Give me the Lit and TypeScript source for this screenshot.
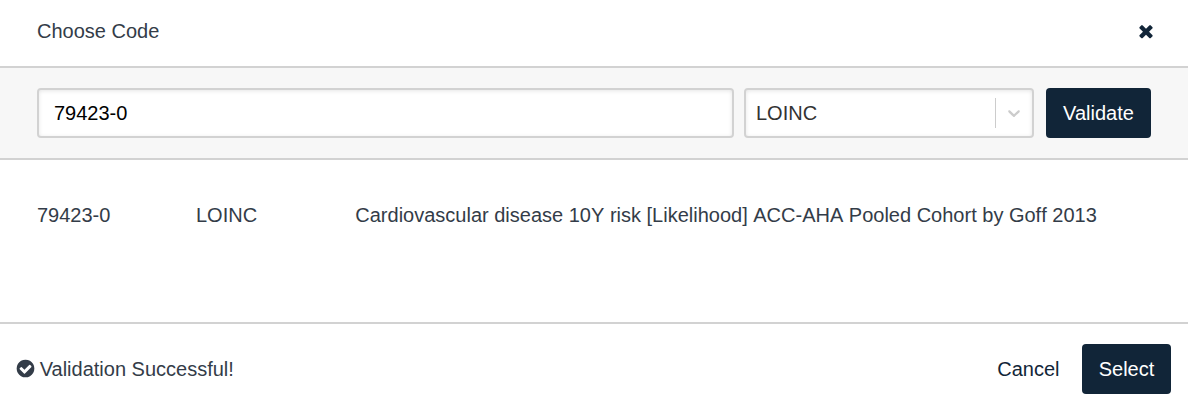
import { LitElement, html, css } from "lit";
import { customElement, state } from "lit/decorators.js";

@customElement("app-root")
export class AppRoot extends LitElement {
  @state() private code = "79423-0";
  @state() private system = "LOINC";
  @state() private description =
    "Cardiovascular disease 10Y risk [Likelihood] ACC-AHA Pooled Cohort by Goff 2013";

  static styles = css`
    :host {
      display: block;
      font-family: "Liberation Sans", Arial, Helvetica, sans-serif;
      font-size: 20px;
      line-height: 24px;
      color: #333c48;
      background: #fff;
    }
    * {
      box-sizing: border-box;
    }
    svg {
      display: block;
      fill: currentColor;
    }
    button {
      font: inherit;
      border: 0;
      margin: 0;
      padding: 0;
      height: 50px;
      color: #112538;
      background: none;
    }
    .modal {
      display: flex;
      flex-direction: column;
      height: 411px;
    }
    .header {
      display: flex;
      align-items: center;
      justify-content: space-between;
      height: 68px;
      padding: 0 32px 4px 37px;
      border-bottom: 2px solid #d2d2d2;
    }
    .header .close {
      height: 20px;
    }
    .search {
      display: flex;
      height: 92px;
      padding: 20px 37px 0;
      background: #f7f7f7;
      border-bottom: 2px solid #d2d2d2;
    }
    .field {
      height: 50px;
      border: 2px solid #d2d2d2;
      border-radius: 4px;
      background: #fff;
      box-shadow: inset 0 1px 4px rgba(0, 0, 0, 0.1);
    }
    input {
      flex: 1;
      min-width: 0;
      margin: 0 10px 0 0;
      padding: 0 15px;
      font: inherit;
      color: #000;
      outline: none;
    }
    .select {
      display: flex;
      align-items: center;
      width: 290px;
      margin-right: 12px;
      color: #333;
    }
    .value {
      flex: 1;
      padding-left: 10px;
    }
    .separator {
      width: 1px;
      height: 30px;
      background: #ccc;
    }
    .arrow {
      padding: 0 8px;
      color: #ccc;
    }
    .primary {
      color: #fff;
      background: #112538;
      border-radius: 4px;
    }
    .validate {
      width: 105px;
    }
    .results {
      flex: 1;
      display: grid;
      grid-template-columns: 159px 159.3px 1fr;
      align-content: start;
      padding: 43px 37px 0;
      white-space: nowrap;
    }
    .description {
      font-kerning: none;
    }
    .footer {
      display: flex;
      align-items: center;
      height: 89px;
      padding: 2px 17px 0 16px;
      border-top: 2px solid #d2d2d2;
    }
    .status {
      flex: 1;
      display: flex;
      align-items: center;
      gap: 4.7px;
    }
    .cancel {
      margin-right: 22.5px;
    }
    .choose {
      width: 89px;
    }
  `;

  render() {
    return html`
      <div class="modal">
        <div class="header">
          <span>Choose Code</span>
          <button class="close" aria-label="Close">
            <svg width="20" height="20" viewBox="0 0 1792 1792">
              <path d="M1490 1322q0 40-28 68l-136 136q-28 28-68 28t-68-28l-294-294-294 294q-28 28-68 28t-68-28l-136-136q-28-28-28-68t28-68l294-294-294-294q-28-28-28-68t28-68l136-136q28-28 68-28t68 28l294 294 294-294q28-28 68-28t68 28l136 136q28 28 28 68t-28 68l-294 294 294 294q28 28 28 68z"/>
            </svg>
          </button>
        </div>
        <div class="search">
          <input class="field" type="text" aria-label="Code" .value=${this.code} />
          <div class="field select">
            <span class="value">${this.system}</span>
            <span class="separator"></span>
            <span class="arrow">
              <svg width="20" height="20" viewBox="0 0 20 20">
                <path d="M4.516 7.548c0.436-0.446 1.043-0.481 1.576 0l3.908 3.747 3.908-3.747c0.533-0.481 1.141-0.446 1.574 0 0.436 0.445 0.408 1.197 0 1.615-0.406 0.418-4.695 4.502-4.695 4.502-0.217 0.223-0.502 0.335-0.787 0.335s-0.57-0.112-0.789-0.335c0 0-4.287-4.084-4.695-4.502s-0.436-1.17 0-1.615z"/>
              </svg>
            </span>
          </div>
          <button class="primary validate">Validate</button>
        </div>
        <div class="results">
          <span>${this.code}</span>
          <span>${this.system}</span>
          <span class="description">${this.description}</span>
        </div>
        <div class="footer">
          <div class="status">
            <svg width="19" height="19" viewBox="72 72 1648 1648">
              <path d="M1412 734q0-28-18-46l-91-90q-19-19-45-19t-45 19l-408 407-226-226q-19-19-45-19t-45 19l-91 90q-18 18-18 46 0 27 18 45l362 362q19 19 45 19 27 0 46-19l543-543q18-18 18-45zm252 162q0 209-103 385.5t-279.5 279.5-385.5 103-385.5-103-279.5-279.5-103-385.5 103-385.5 279.5-279.5 385.5-103 385.5 103 279.5 279.5 103 385.5z"/>
            </svg>
            <span>Validation Successful!</span>
          </div>
          <button class="cancel">Cancel</button>
          <button class="primary choose">Select</button>
        </div>
      </div>
    `;
  }
}
